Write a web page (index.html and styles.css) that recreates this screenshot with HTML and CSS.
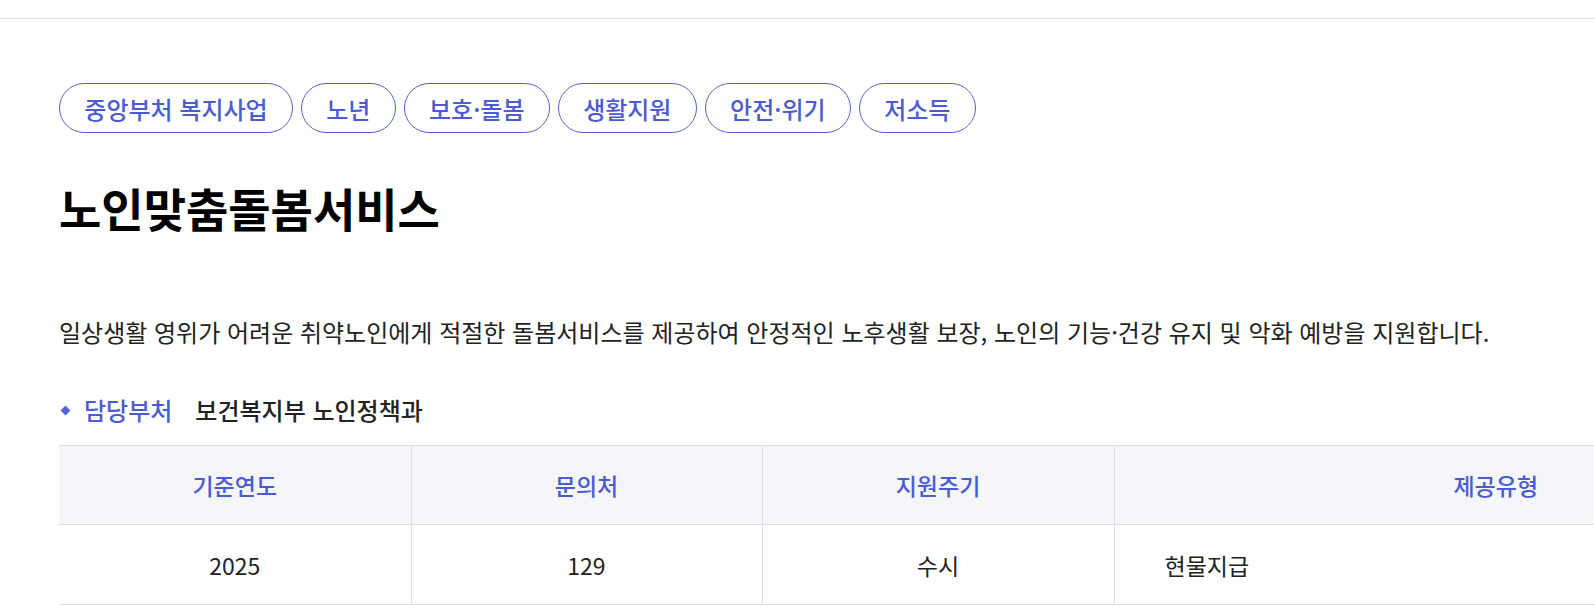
FILE: index.html
```html
<!DOCTYPE html>
<html lang="ko">
<head>
<meta charset="utf-8">
<title>노인맞춤돌봄서비스</title>
<link rel="stylesheet" href="styles.css">
</head>
<body>
<div class="page">
  <div class="topbar"></div>
  <main class="content">
    <ul class="tags">
      <li class="tag">중앙부처 복지사업</li>
      <li class="tag">노년</li>
      <li class="tag">보호·돌봄</li>
      <li class="tag">생활지원</li>
      <li class="tag">안전·위기</li>
      <li class="tag">저소득</li>
    </ul>
    <h1 class="title">노인맞춤돌봄서비스</h1>
    <p class="desc">일상생활 영위가 어려운 취약노인에게 적절한 돌봄서비스를 제공하여 안정적인 노후생활 보장, 노인의 기능·건강 유지 및 악화 예방을 지원합니다.</p>
    <div class="dept">
      <span class="dept-label">담당부처</span>
      <span class="dept-value">보건복지부 노인정책과</span>
    </div>
    <table class="info">
      <colgroup>
        <col class="c1"><col class="c2"><col class="c3"><col class="c4">
      </colgroup>
      <thead>
        <tr><th>기준연도</th><th>문의처</th><th>지원주기</th><th>제공유형</th></tr>
      </thead>
      <tbody>
        <tr><td>2025</td><td>129</td><td>수시</td><td class="left">현물지급</td></tr>
      </tbody>
    </table>
  </main>
</div>
</body>
</html>
```
FILE: styles.css
```css
html, body {
  margin: 0;
  padding: 0;
  background: #fff;
  overflow: hidden;
}
body {
  font-family: "Noto Sans CJK KR", "Noto Sans", sans-serif;
  color: #222;
}
.page {
  width: 1594px;
  height: 614px;
  overflow: hidden;
}
.topbar {
  height: 18px;
  border-bottom: 1px solid #e2e2e2;
}
.content {
  padding: 64px 0 0 59px;
}
.tags {
  list-style: none;
  margin: 0;
  padding: 0;
  display: flex;
  gap: 8px;
}
.tag {
  height: 50px;
  box-sizing: border-box;
  border: 1px solid #5563d6;
  border-radius: 25px;
  padding: 0 24.3px;
  display: flex;
  align-items: center;
  font-size: 24px;
  font-weight: 500;
  color: #4b5bd3;
}
.title {
  margin: 44px 0 0;
  font-size: 46px;
  font-weight: 700;
  line-height: 60px;
  color: #000;
}
.desc {
  margin: 80px 0 0;
  font-size: 24px;
  line-height: 30px;
  color: #222;
}
.dept {
  margin-top: 48px;
  display: flex;
  align-items: center;
  font-size: 24px;
  line-height: 30px;
}
.dept-label {
  position: relative;
  padding-left: 25px;
  color: #4b5bd3;
  font-weight: 500;
  margin-right: 23px;
}
.dept-label::before {
  content: "";
  position: absolute;
  left: 3px;
  top: 12px;
  width: 7px;
  height: 7px;
  background: #5563d6;
  transform: rotate(45deg);
}
.dept-value {
  font-weight: 500;
  color: #222;
}
.info {
  margin-top: 20px;
  border-collapse: collapse;
  table-layout: fixed;
  width: 1818px;
  border-top: 1px solid #dedede;
  border-bottom: 1px solid #dedede;
}
.c1 { width: 352px; }
.c2 { width: 351px; }
.c3 { width: 352px; }
.c4 { width: 763px; }
.info th, .info td {
  border-left: 1px solid #e0e0e0;
  text-align: center;
  padding: 0;
}
.info th:first-child, .info td:first-child {
  border-left: none;
}
.info th {
  height: 78px;
  background: #f5f6fa;
  color: #4b5bd3;
  font-size: 23px;
  font-weight: 500;
  border-bottom: 1px solid #dedede;
}
.info td {
  height: 79px;
  font-size: 23px;
  font-weight: 400;
  color: #222;
}
.info td.left {
  text-align: left;
  padding-left: 50px;
}
```
